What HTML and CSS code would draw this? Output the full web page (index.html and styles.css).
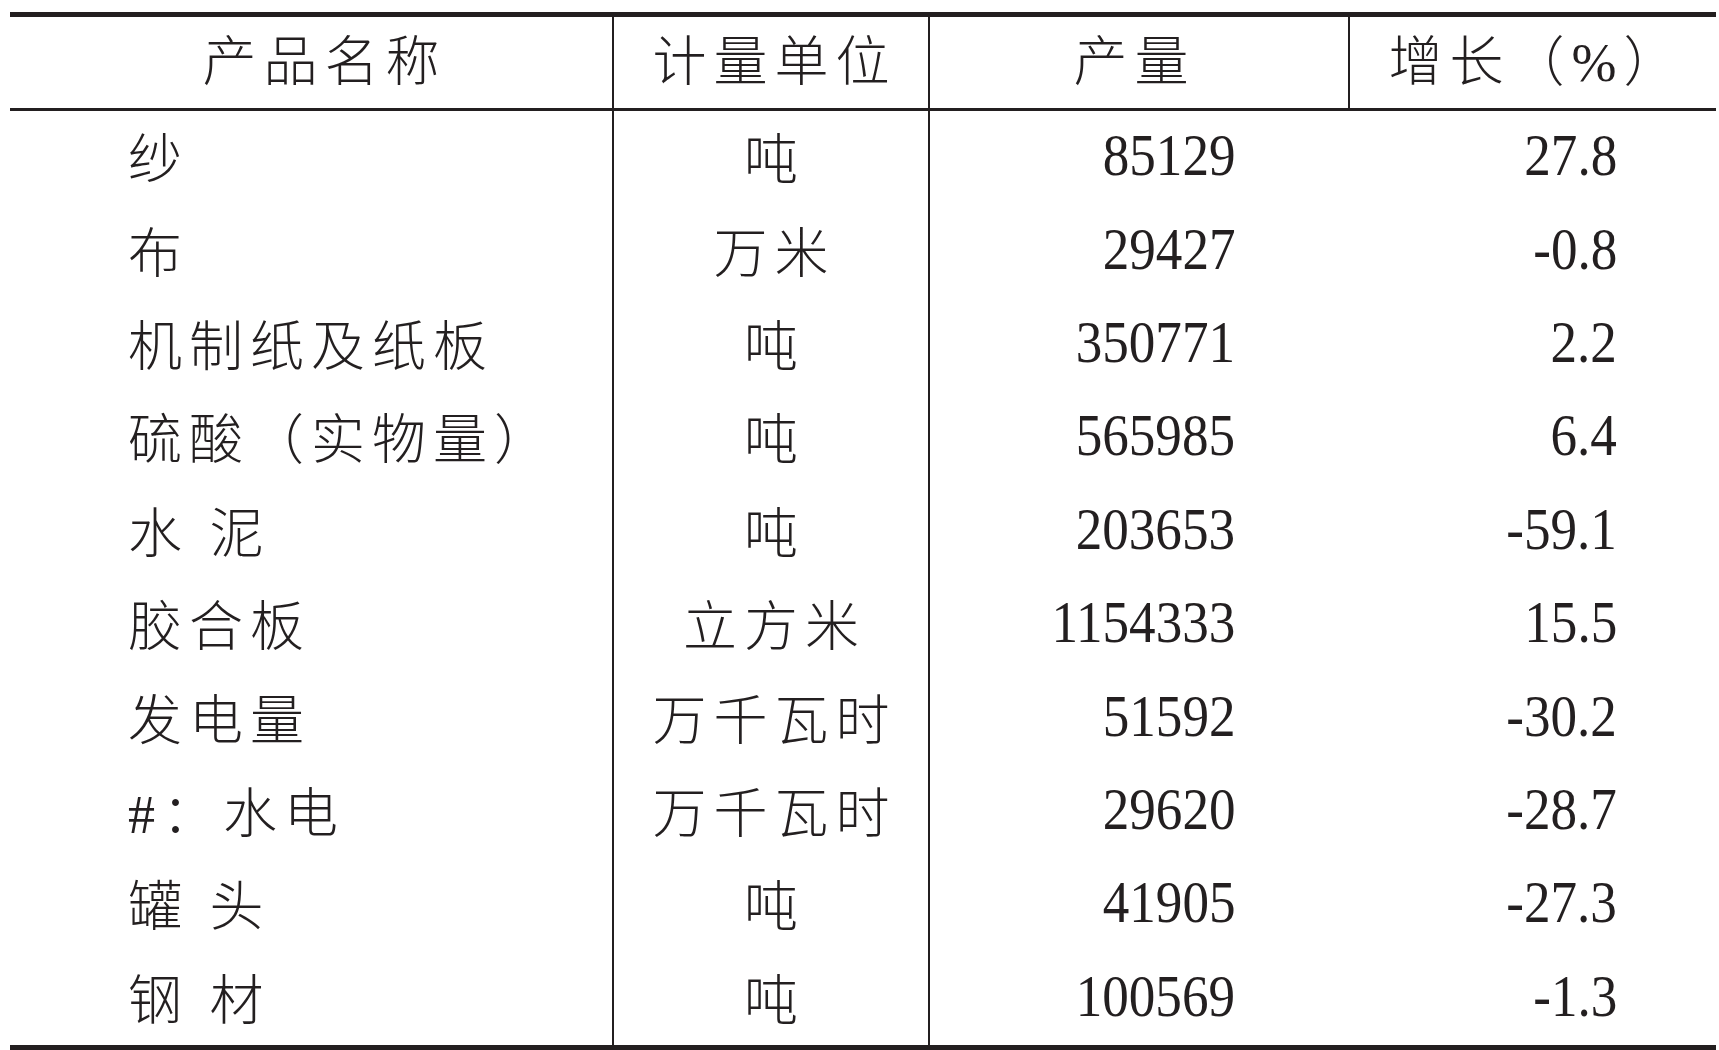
FILE: index.html
```html
<!DOCTYPE html>
<html lang="zh-CN">
<head>
<meta charset="utf-8">
<title>主要工业产品产量</title>
<link rel="stylesheet" href="styles.css">
</head>
<body>
<div class="table">
  <div class="row head">
    <div class="cell c1 h1">产品名称</div>
    <div class="cell c2">计量单位</div>
    <div class="cell c3 h3">产量</div>
    <div class="cell c4">增长（%）</div>
  </div>
  <div class="row"><div class="cell c1">纱</div><div class="cell c2">吨</div><div class="cell c3"><span class="num">85129</span></div><div class="cell c4"><span class="num">27.8</span></div></div>
  <div class="row"><div class="cell c1">布</div><div class="cell c2">万米</div><div class="cell c3"><span class="num">29427</span></div><div class="cell c4"><span class="num">-0.8</span></div></div>
  <div class="row"><div class="cell c1">机制纸及纸板</div><div class="cell c2">吨</div><div class="cell c3"><span class="num">350771</span></div><div class="cell c4"><span class="num">2.2</span></div></div>
  <div class="row"><div class="cell c1">硫酸（实物量）</div><div class="cell c2">吨</div><div class="cell c3"><span class="num">565985</span></div><div class="cell c4"><span class="num">6.4</span></div></div>
  <div class="row"><div class="cell c1">水 泥</div><div class="cell c2">吨</div><div class="cell c3"><span class="num">203653</span></div><div class="cell c4"><span class="num">-59.1</span></div></div>
  <div class="row"><div class="cell c1">胶合板</div><div class="cell c2">立方米</div><div class="cell c3"><span class="num">1154333</span></div><div class="cell c4"><span class="num">15.5</span></div></div>
  <div class="row"><div class="cell c1">发电量</div><div class="cell c2">万千瓦时</div><div class="cell c3"><span class="num">51592</span></div><div class="cell c4"><span class="num">-30.2</span></div></div>
  <div class="row"><div class="cell c1">#：水电</div><div class="cell c2">万千瓦时</div><div class="cell c3"><span class="num">29620</span></div><div class="cell c4"><span class="num">-28.7</span></div></div>
  <div class="row"><div class="cell c1">罐 头</div><div class="cell c2">吨</div><div class="cell c3"><span class="num">41905</span></div><div class="cell c4"><span class="num">-27.3</span></div></div>
  <div class="row"><div class="cell c1">钢 材</div><div class="cell c2">吨</div><div class="cell c3"><span class="num">100569</span></div><div class="cell c4"><span class="num">-1.3</span></div></div>
</div>
</body>
</html>
```

FILE: styles.css
```css
html, body {
  margin: 0;
  padding: 0;
  background: #ffffff;
}

body {
  font-family: "Liberation Serif", "Noto Sans CJK SC", serif;
  color: #231f20;
  overflow: hidden;
}

.table {
  margin: 12px 0 0 10px;
  width: 1706px;
  border-top: 5px solid #231f20;
  border-bottom: 5px solid #231f20;
}

.row {
  display: grid;
  grid-template-columns: 604px 316px 420px 366px;
  height: 93.4px;
}

.row.head {
  height: 94px;
  border-bottom: 3px solid #231f20;
  box-sizing: border-box;
}

.cell {
  box-sizing: border-box;
  display: flex;
  align-items: center;
  font-size: 54px;
  letter-spacing: 7px;
  white-space: nowrap;
  font-weight: 300;
  padding-bottom: 4px;
}

.c1 {
  border-right: 2px solid #231f20;
  padding-left: 118px;
}

.c2 {
  border-right: 2px solid #231f20;
  justify-content: center;
  padding-left: 7px;
}

.c3 {
  justify-content: flex-end;
  padding-right: 115px;
}

.c4 {
  justify-content: flex-end;
  padding-right: 99px;
}

.head .cell {
  justify-content: center;
  padding: 0 0 10px 7px;
}

.head .h1 {
  padding-left: 27px;
}

.head .h3 {
  border-right: 2px solid #231f20;
  padding-right: 16px;
}

.num {
  display: inline-block;
  font-family: "Liberation Serif", serif;
  font-size: 59px;
  font-weight: 400;
  letter-spacing: 0;
  transform: scaleX(0.9);
  transform-origin: right center;
}
```
